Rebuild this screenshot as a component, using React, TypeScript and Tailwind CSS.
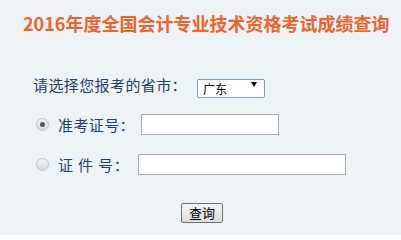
import React from "react";

const cjk = "font-['Microsoft_YaHei','Noto_Sans_CJK_SC',sans-serif]";

function Radio({ checked }: { checked?: boolean }) {
  return (
    <span className="flex h-[13px] w-[13px] items-center justify-center rounded-full border border-[#c4c4c4] bg-gradient-to-b from-[#f4f4f4] to-[#d9d9d9]">
      {checked && <span className="h-[5px] w-[5px] rounded-full bg-[#5a5a5a]" />}
    </span>
  );
}

export default function App() {
  return (
    <div className={`h-[235px] w-[401px] overflow-hidden bg-[#eef3f6] ${cjk}`}>
      {/* title */}
      <h1 className="whitespace-nowrap pl-[23px] pt-[11px] text-[18px] font-bold leading-[24px] text-[#f0642c]">
        2016年度全国会计专业技术资格考试成绩查询
      </h1>

      {/* province */}
      <div className="mt-[40px] flex h-[19px] items-center pl-[33px]">
        <span className="text-[15px] leading-[19px] tracking-[0.4px] text-[#233e6b]">请选择您报考的省市：</span>
        <div className="relative ml-[10px] h-[19px] w-[68px]">
          <select className="h-full w-full appearance-none rounded-[2px] border border-[#7f9db9] bg-white pl-[5px] text-[12px] leading-[17px] text-black outline-none">
            <option>广东</option>
          </select>
          <span className="pointer-events-none absolute right-[8px] top-[7px] h-0 w-0 border-x-[3.5px] border-t-[5px] border-x-transparent border-t-black" />
        </div>
      </div>

      {/* exam number */}
      <div className="mt-[20px] flex h-[21px] items-center pl-[36px]">
        <Radio checked />
        <span className="ml-[9px] text-[15px] leading-[21px] tracking-[0.4px] text-[#233e6b]">准考证号：</span>
        <input className="ml-[6px] h-[21px] w-[138px] border border-[#a9a9a9] bg-white outline-none" />
      </div>

      {/* id number */}
      <div className="mt-[19px] flex h-[21px] items-center pl-[36px]">
        <Radio />
        <span className="ml-[9px] whitespace-pre text-[15px] leading-[21px] tracking-[0.8px] text-[#233e6b]">证 件 号：</span>
        <input className="ml-[8px] h-[21px] w-[208px] border border-[#a9a9a9] bg-white outline-none" />
      </div>

      {/* submit */}
      <div className="mt-[28px] pl-[181px]">
        <button className="flex h-[20px] w-[42px] items-center justify-center rounded-[2px] border border-[#707070] bg-gradient-to-b from-[#f6f6f6] to-[#dddddd] text-[13px] leading-[18px] text-black">
          查询
        </button>
      </div>
    </div>
  );
}
